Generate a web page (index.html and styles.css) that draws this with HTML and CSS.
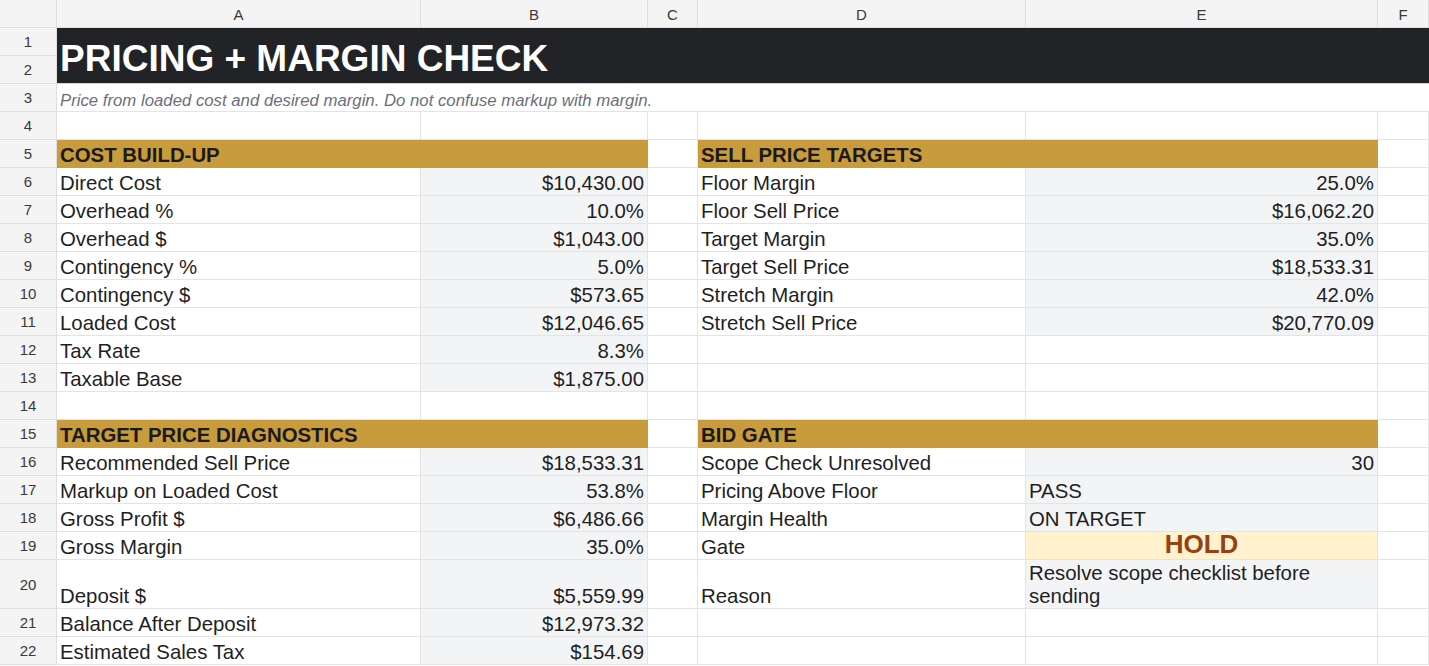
FILE: index.html
```html
<!DOCTYPE html>
<html>
<head>
<meta charset="utf-8">
<link rel="stylesheet" href="styles.css">
</head>
<body>
<div class="sheet">
  <div class="corner"></div>
  <div class="ch">A</div><div class="ch">B</div><div class="ch">C</div><div class="ch">D</div><div class="ch">E</div><div class="ch">F</div>

  <div class="rn">1</div>
  <div class="c title">PRICING + MARGIN CHECK</div>
  <div class="rn">2</div>

  <div class="rn">3</div>
  <div class="c sub">Price from loaded cost and desired margin. Do not confuse markup with margin.</div>

  <div class="rn">4</div>
  <div class="c"></div><div class="c"></div><div class="c"></div><div class="c"></div><div class="c"></div><div class="c"></div>

  <div class="rn">5</div>
  <div class="c sec span2">COST BUILD-UP</div><div class="c"></div><div class="c sec span2">SELL PRICE TARGETS</div><div class="c"></div>

  <div class="rn">6</div>
  <div class="c">Direct Cost</div><div class="c g num">$10,430.00</div><div class="c"></div><div class="c">Floor Margin</div><div class="c g num">25.0%</div><div class="c"></div>
  <div class="rn">7</div>
  <div class="c">Overhead %</div><div class="c g num">10.0%</div><div class="c"></div><div class="c">Floor Sell Price</div><div class="c g num">$16,062.20</div><div class="c"></div>
  <div class="rn">8</div>
  <div class="c">Overhead $</div><div class="c g num">$1,043.00</div><div class="c"></div><div class="c">Target Margin</div><div class="c g num">35.0%</div><div class="c"></div>
  <div class="rn">9</div>
  <div class="c">Contingency %</div><div class="c g num">5.0%</div><div class="c"></div><div class="c">Target Sell Price</div><div class="c g num">$18,533.31</div><div class="c"></div>
  <div class="rn">10</div>
  <div class="c">Contingency $</div><div class="c g num">$573.65</div><div class="c"></div><div class="c">Stretch Margin</div><div class="c g num">42.0%</div><div class="c"></div>
  <div class="rn">11</div>
  <div class="c">Loaded Cost</div><div class="c g num">$12,046.65</div><div class="c"></div><div class="c">Stretch Sell Price</div><div class="c g num">$20,770.09</div><div class="c"></div>
  <div class="rn">12</div>
  <div class="c">Tax Rate</div><div class="c g num">8.3%</div><div class="c"></div><div class="c"></div><div class="c"></div><div class="c"></div>
  <div class="rn">13</div>
  <div class="c">Taxable Base</div><div class="c g num">$1,875.00</div><div class="c"></div><div class="c"></div><div class="c"></div><div class="c"></div>
  <div class="rn">14</div>
  <div class="c"></div><div class="c"></div><div class="c"></div><div class="c"></div><div class="c"></div><div class="c"></div>

  <div class="rn">15</div>
  <div class="c sec span2">TARGET PRICE DIAGNOSTICS</div><div class="c"></div><div class="c sec span2">BID GATE</div><div class="c"></div>

  <div class="rn">16</div>
  <div class="c">Recommended Sell Price</div><div class="c g num">$18,533.31</div><div class="c"></div><div class="c">Scope Check Unresolved</div><div class="c g num">30</div><div class="c"></div>
  <div class="rn">17</div>
  <div class="c">Markup on Loaded Cost</div><div class="c g num">53.8%</div><div class="c"></div><div class="c">Pricing Above Floor</div><div class="c g">PASS</div><div class="c"></div>
  <div class="rn">18</div>
  <div class="c">Gross Profit $</div><div class="c g num">$6,486.66</div><div class="c"></div><div class="c">Margin Health</div><div class="c g">ON TARGET</div><div class="c"></div>
  <div class="rn">19</div>
  <div class="c">Gross Margin</div><div class="c g num">35.0%</div><div class="c"></div><div class="c">Gate</div><div class="c hold">HOLD</div><div class="c"></div>
  <div class="rn">20</div>
  <div class="c">Deposit $</div><div class="c g num">$5,559.99</div><div class="c"></div><div class="c">Reason</div><div class="c g wrap">Resolve scope checklist before sending</div><div class="c"></div>
  <div class="rn">21</div>
  <div class="c">Balance After Deposit</div><div class="c g num">$12,973.32</div><div class="c"></div><div class="c"></div><div class="c"></div><div class="c"></div>
  <div class="rn">22</div>
  <div class="c">Estimated Sales Tax</div><div class="c g num">$154.69</div><div class="c"></div><div class="c"></div><div class="c"></div><div class="c"></div>
</div>
</body>
</html>
```
FILE: styles.css
```css
html, body {
  margin: 0;
  padding: 0;
  background: #ffffff;
}

body {
  font-family: "Liberation Sans", Arial, sans-serif;
  color: #1f1f1f;
  overflow: hidden;
}

.sheet {
  display: grid;
  grid-template-columns: 57px 364px 227px 50px 328px 352px 51px;
  grid-template-rows: 28px repeat(19, 28px) 49px 28px 28px;
  width: 1429px;
}

.corner,
.ch,
.rn {
  background: #f4f4f4;
  color: #3a3a3a;
  font-size: 15px;
  display: flex;
  align-items: center;
  justify-content: center;
  box-sizing: border-box;
  border-right: 1px solid #dedede;
  border-bottom: 1px solid #dedede;
}

.ch {
  padding-top: 1px;
}

.rn {
  grid-column: 1;
}

.c {
  box-sizing: border-box;
  border-right: 1px solid #e4e4e4;
  border-bottom: 1px solid #e4e4e4;
  font-size: 20.4px;
  line-height: 23px;
  padding: 0 3px 0 3px;
  display: flex;
  align-items: flex-end;
  white-space: nowrap;
  overflow: visible;
  min-width: 0;
}

.g {
  background: #f3f4f6;
}

.num {
  justify-content: flex-end;
}

.span2 {
  grid-column: span 2;
}

.sec {
  background: #c89b3c;
  border-color: transparent;
  font-weight: bold;
  color: #1a1a1a;
}

.title {
  grid-column: 2 / 8;
  grid-row: 2 / 4;
  background: #222326;
  color: #ffffff;
  font-weight: bold;
  font-size: 37px;
  line-height: 43px;
  padding-bottom: 3px;
  border-right: none;
  border-bottom: 1px solid #d6d6d6;
}

.sub {
  grid-column: 2 / 8;
  font-size: 16.75px;
  line-height: 19px;
  font-style: italic;
  color: #6b6f7a;
  padding-bottom: 1px;
  border-right: none;
}

.hold {
  background: #fff2cc;
  color: #974013;
  font-weight: bold;
  font-size: 26px;
  line-height: 26px;
  justify-content: center;
  padding-bottom: 2px;
}

.wrap {
  white-space: normal;
}
```
